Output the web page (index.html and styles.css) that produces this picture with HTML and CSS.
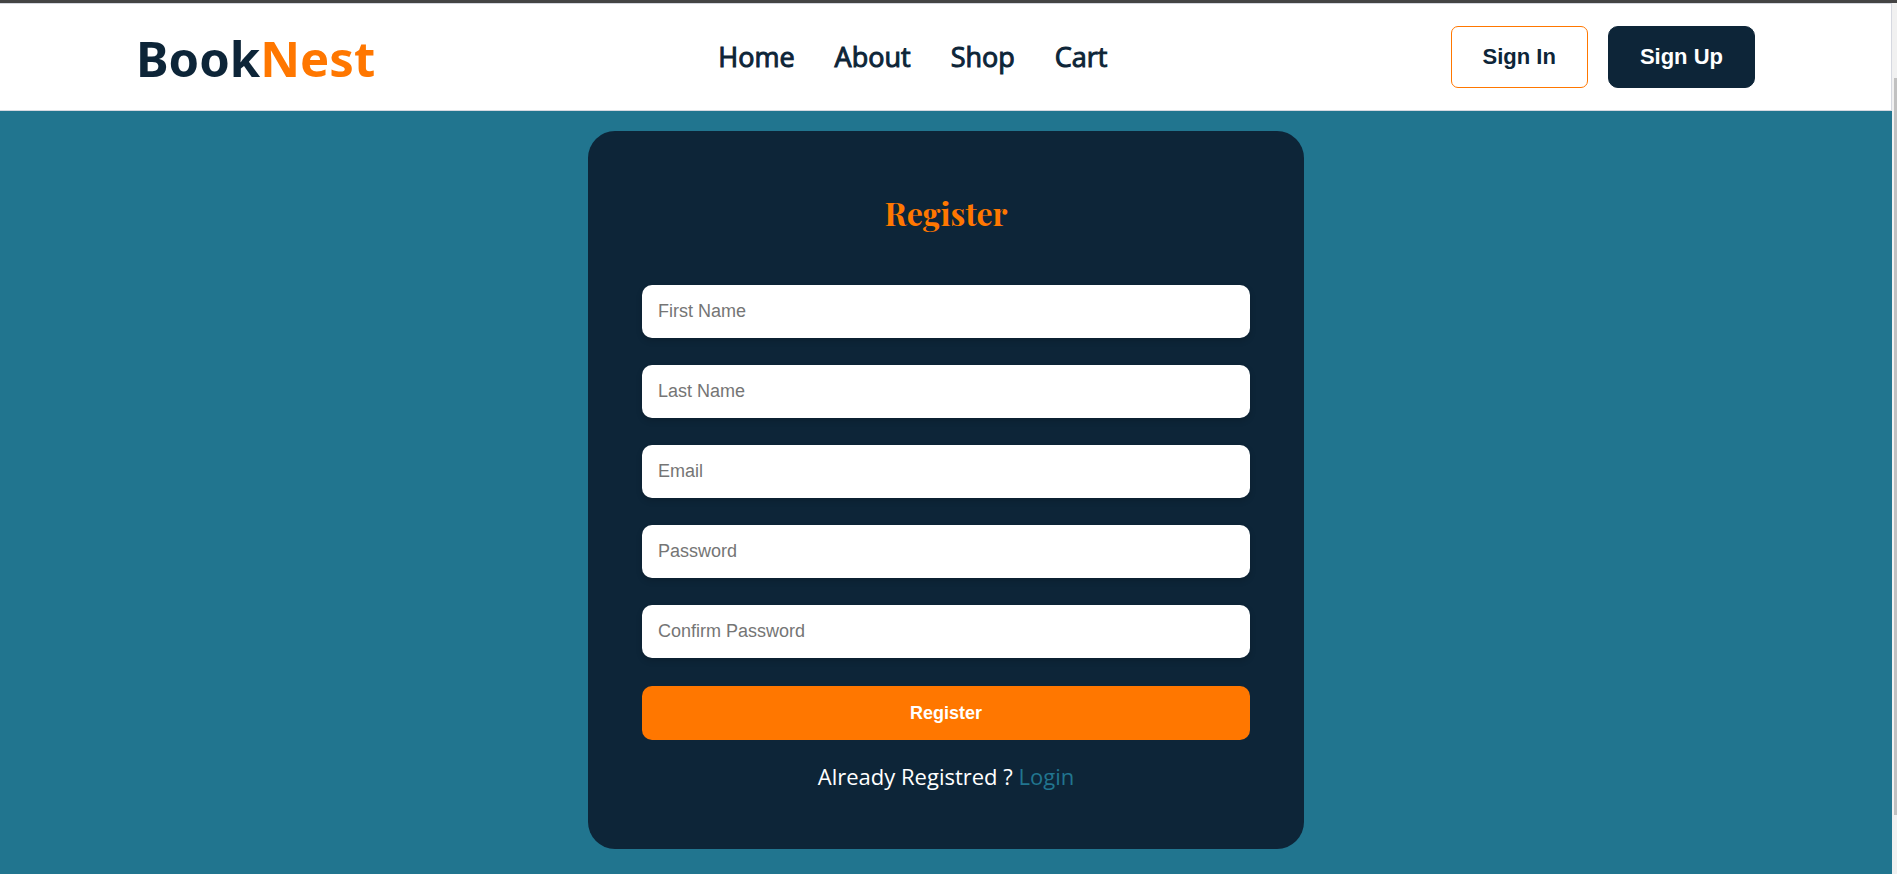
FILE: index.html
```html
<!DOCTYPE html>
<html lang="en">
<head>
<meta charset="utf-8">
<meta name="viewport" content="width=device-width, initial-scale=1">
<title>BookNest - Register</title>
<link rel="stylesheet" href="styles.css">
</head>
<body class="page">
  <div class="top-strip"></div>
  <div class="viewport">
    <div class="content">
      <header class="header">
        <a class="logo" href="#">Book<span class="logo-accent">Nest</span></a>
        <nav class="nav">
          <a class="nav-link" href="#">Home</a>
          <a class="nav-link" href="#">About</a>
          <a class="nav-link" href="#">Shop</a>
          <a class="nav-link" href="#">Cart</a>
        </nav>
        <div class="actions">
          <button class="btn btn-outline" type="button">Sign In</button>
          <button class="btn btn-solid" type="button">Sign Up</button>
        </div>
      </header>
      <main class="main">
        <form class="card">
          <h1 class="card-title">Register</h1>
          <div class="fields">
            <input class="field" type="text" placeholder="First Name" aria-label="First Name">
            <input class="field" type="text" placeholder="Last Name" aria-label="Last Name">
            <input class="field" type="email" placeholder="Email" aria-label="Email">
            <input class="field" type="password" placeholder="Password" aria-label="Password">
            <input class="field" type="password" placeholder="Confirm Password" aria-label="Confirm Password">
          </div>
          <button class="submit" type="submit">Register</button>
          <p class="login-note">Already Registred ? <a class="login-link" href="#">Login</a></p>
        </form>
      </main>
    </div>
    <div class="scroll-track"><div class="scroll-thumb"></div></div>
  </div>
</body>
</html>
```
FILE: styles.css
```css
* {
  box-sizing: border-box;
}

.page {
  margin: 0;
  min-height: 100vh;
  display: flex;
  flex-direction: column;
  background: #21758f;
  font-family: "Open Sans", "Noto Sans", sans-serif;
}

.top-strip {
  height: 3px;
  background: #444444;
}

.viewport {
  flex: 1;
  display: flex;
}

.content {
  flex: 1;
  display: flex;
  flex-direction: column;
}

.header {
  display: flex;
  align-items: center;
  justify-content: space-between;
  min-height: 108px;
  padding: 0 136px;
  background: #ffffff;
  border: 1px solid #d5d8e0;
  border-left: 0;
}

.logo {
  padding-top: 2px;
  color: #0d2538;
  font-family: "Noto Sans", sans-serif;
  font-size: 49px;
  font-weight: 700;
  line-height: 68px;
  text-decoration: none;
}

.logo-accent {
  color: #ff7700;
}

.nav {
  display: flex;
  gap: 40px;
}

.nav-link {
  color: #0d2538;
  font-size: 27px;
  line-height: 36px;
  text-decoration: none;
  -webkit-text-stroke: 1px #0d2538;
}

.actions {
  display: flex;
  gap: 20px;
  padding-bottom: 1px;
}

.btn {
  padding: 18px 31px;
  border: 1px solid #0d2538;
  font-family: "Liberation Sans", Arial, sans-serif;
  font-size: 22px;
  font-weight: 700;
  line-height: 24px;
}

.btn-outline {
  border-color: #ff7700;
  border-radius: 7px;
  background: #ffffff;
  color: #0d2538;
}

.btn-solid {
  border-radius: 10px;
  background: #0d2538;
  color: #ffffff;
}

.main {
  flex: 1;
  display: flex;
  justify-content: center;
  align-items: flex-start;
  padding: 20px;
}

.card {
  display: flex;
  flex-direction: column;
  width: 100%;
  max-width: 716px;
  padding: 56px 54px 54px;
  border-radius: 27px;
  background: #0d2538;
}

.card-title {
  margin: 0 0 46px;
  color: #ff7700;
  font-family: "Playfair Display", "Liberation Serif", serif;
  font-size: 32px;
  font-weight: 700;
  line-height: 52px;
  text-align: center;
}

.fields {
  display: flex;
  flex-direction: column;
  gap: 27px;
  margin-bottom: 28px;
}

.field {
  width: 100%;
  padding: 16px;
  border: 0;
  border-radius: 10px;
  background: #ffffff;
  box-shadow: 0 3px 6px rgba(0, 0, 0, 0.16);
  color: #0d2538;
  font-family: "Liberation Sans", Arial, sans-serif;
  font-size: 18px;
  line-height: 21px;
}

.field::placeholder {
  color: #757575;
}

.submit {
  padding: 16px;
  border: 0;
  border-radius: 10px;
  background: #ff7700;
  color: #ffffff;
  font-family: "Liberation Sans", Arial, sans-serif;
  font-size: 18px;
  font-weight: 700;
  line-height: 22px;
}

.login-note {
  margin: 21px 0 4px;
  color: #ffffff;
  font-size: 22px;
  line-height: 30px;
  text-align: center;
}

.login-link {
  color: #21758f;
  text-decoration: none;
}

.scroll-track {
  width: 5px;
  padding: 75px 0 59px 2px;
  background: #f1f1f1;
}

.scroll-thumb {
  height: 100%;
  background: #c1c1c1;
}
```
